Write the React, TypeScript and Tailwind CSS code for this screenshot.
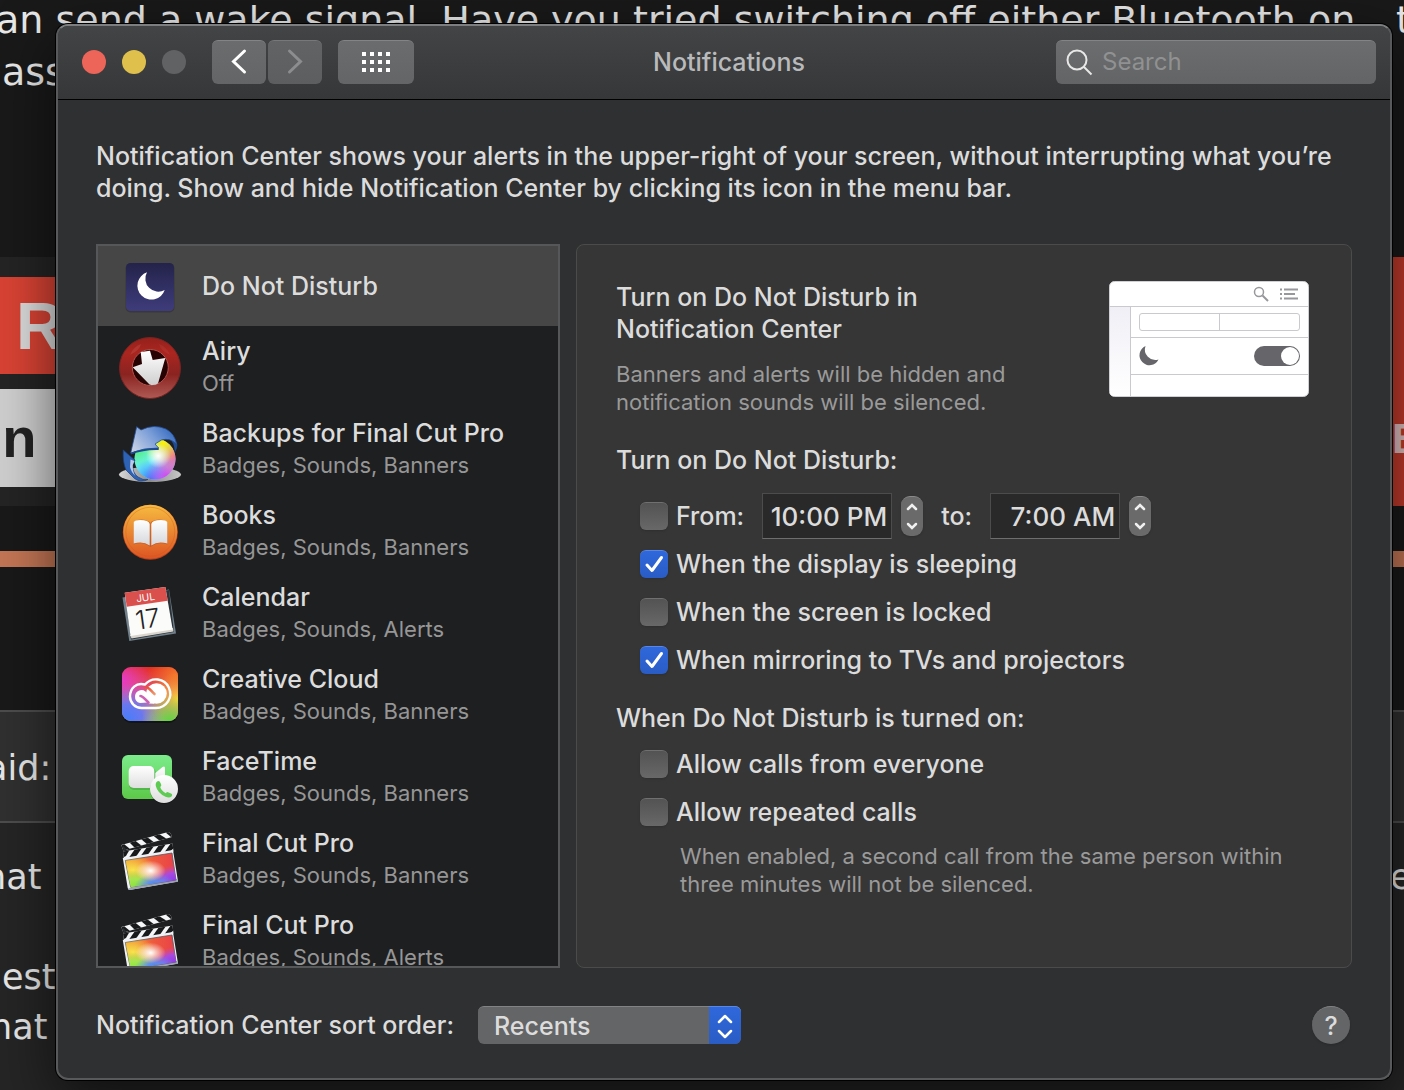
import { useId, useState } from "react";
import type { ReactNode } from "react";

function MoonIcon() {
  return (
    <svg viewBox="0 0 64 64" className="size-16" aria-hidden="true">
      <defs>
        <linearGradient id="dnd-bg" x1="0" y1="0" x2="0" y2="1">
          <stop offset="0" stopColor="#23234a" />
          <stop offset="1" stopColor="#3f3c7c" />
        </linearGradient>
      </defs>
      <rect x="7.5" y="9.5" width="49" height="49" rx="5" fill="#000" opacity=".2" />
      <rect x="8" y="9" width="48" height="48" rx="4.5" fill="url(#dnd-bg)" />
      <path d="M29 18.300A14 14 0 1 0 46.700 36A13 13 0 0 1 29 18.300Z" fill="#fff" />
    </svg>
  );
}

function AiryIcon() {
  return (
    <svg viewBox="0 0 64 64" className="size-16" aria-hidden="true">
      <defs>
        <linearGradient id="airy-ball" x1="0" y1="0" x2="0" y2="1">
          <stop offset="0" stopColor="#94201b" />
          <stop offset=".25" stopColor="#ab2620" />
          <stop offset=".6" stopColor="#8a2320" />
          <stop offset="1" stopColor="#b05a55" />
        </linearGradient>
        <linearGradient id="airy-arrow" x1="0" y1="0" x2="0" y2="1">
          <stop offset="0" stopColor="#fff" />
          <stop offset="1" stopColor="#cfcfcf" />
        </linearGradient>
      </defs>
      <circle cx="32" cy="33" r="30.500" fill="url(#airy-ball)" stroke="#7a2320" strokeWidth="1" />
      <path d="M12 20Q15 12 23 9Q22 15 12 20Z" fill="#d86b62" opacity=".25" />
      <path d="M52 20Q49 12 41 9Q42 15 52 20Z" fill="#d86b62" opacity=".15" />
      <circle cx="32.300" cy="32.500" r="18" fill="#280303" stroke="#b5524c" strokeWidth="1" />
      <path
        d="M22.700 17L32 15.700L34.700 25L47.300 23L40 48.500Q36 51 31.500 49.500L14.700 32.300L24 29Z"
        fill="url(#airy-arrow)"
      />
    </svg>
  );
}

function BackupsIcon() {
  return (
    <svg viewBox="0 0 64 66" className="h-[66px] w-16" aria-hidden="true">
      <defs>
        <radialGradient id="orb-y" cx=".7" cy=".1" r=".5">
          <stop offset="0" stopColor="#fff200" />
          <stop offset="1" stopColor="#fff200" stopOpacity="0" />
        </radialGradient>
        <radialGradient id="orb-r" cx="1" cy=".4" r=".55">
          <stop offset="0" stopColor="#ff5aa0" />
          <stop offset="1" stopColor="#ff5aa0" stopOpacity="0" />
        </radialGradient>
        <radialGradient id="orb-m" cx=".8" cy=".95" r=".55">
          <stop offset="0" stopColor="#e03cf0" />
          <stop offset="1" stopColor="#e03cf0" stopOpacity="0" />
        </radialGradient>
        <radialGradient id="orb-b" cx=".4" cy="1" r=".5">
          <stop offset="0" stopColor="#2f7cff" />
          <stop offset="1" stopColor="#2f7cff" stopOpacity="0" />
        </radialGradient>
        <radialGradient id="orb-g" cx="0" cy=".15" r=".6">
          <stop offset="0" stopColor="#4bea5c" />
          <stop offset="1" stopColor="#4bea5c" stopOpacity="0" />
        </radialGradient>
        <radialGradient id="orb-w" cx=".58" cy=".42" r=".3">
          <stop offset="0" stopColor="#fff" />
          <stop offset="1" stopColor="#fff" stopOpacity="0" />
        </radialGradient>
        <linearGradient id="bk-arrow" x1="0" y1=".7" x2="1" y2=".2">
          <stop offset="0" stopColor="#c3cee4" />
          <stop offset=".5" stopColor="#7c9fd8" />
          <stop offset="1" stopColor="#2f66bd" />
        </linearGradient>
        <linearGradient id="bk-shadow" x1="0" y1="0" x2="1" y2="0">
          <stop offset="0" stopColor="#d8d8d8" />
          <stop offset=".5" stopColor="#8a8a8a" />
          <stop offset="1" stopColor="#c8c8c8" />
        </linearGradient>
      </defs>
      <ellipse cx="32" cy="58.500" rx="31" ry="7.500" fill="url(#bk-shadow)" />
      <circle cx="37" cy="43" r="20.500" fill="#6ff4f4" />
      <circle cx="37" cy="43" r="20.500" fill="url(#orb-g)" />
      <circle cx="37" cy="43" r="20.500" fill="url(#orb-b)" />
      <circle cx="37" cy="43" r="20.500" fill="url(#orb-m)" />
      <circle cx="37" cy="43" r="20.500" fill="url(#orb-r)" />
      <circle cx="37" cy="43" r="20.500" fill="url(#orb-y)" />
      <circle cx="37" cy="43" r="20.500" fill="url(#orb-w)" />
      <path d="M51 22Q56 26 57 36Q61 30 58 25Z" fill="#1e4a92" />
      <path
        d="M18.700 10.700L23 14Q36 7.500 48 13Q57 18 58.500 28Q52 21.500 43.500 24L37 28L40.700 32Q26 31.500 12.700 37Z"
        fill="url(#bk-arrow)"
        stroke="#24509a"
        strokeWidth=".8"
      />
      <path d="M12.700 37Q26 31.500 40.700 32V34Q26 33.500 13 38.500Z" fill="#1e4a92" />
      <path
        d="M5.300 34L12 40L17 44L14.500 49Q14.500 57 20 61Q25 64.500 30 63.500Q23 67 16.500 62.500L8 54Q4.500 46 5.300 34Z"
        fill="#2d62b4"
        stroke="#1a3f80"
        strokeWidth=".7"
      />
      <path d="M12.500 43.500L16.500 45L14.800 49Q14.500 56 17.500 60Q13 56 12 51Z" fill="#b9c9e6" />
    </svg>
  );
}

function BooksIcon() {
  return (
    <svg viewBox="0 0 64 64" className="size-16" aria-hidden="true">
      <defs>
        <linearGradient id="books-bg" x1="0" y1="0" x2="0" y2="1">
          <stop offset="0" stopColor="#f6bb40" />
          <stop offset="1" stopColor="#dd5423" />
        </linearGradient>
        <linearGradient id="books-page" x1="0" y1="0" x2="0" y2="1">
          <stop offset="0" stopColor="#fff" />
          <stop offset="1" stopColor="#d4d6da" />
        </linearGradient>
      </defs>
      <circle cx="32.300" cy="33.300" r="27.500" fill="#b8401c" />
      <circle cx="32.300" cy="32.800" r="27" fill="url(#books-bg)" />
      <circle cx="32.300" cy="32.800" r="24.500" fill="none" stroke="#c9551f" strokeOpacity=".35" />
      <path
        d="M15.700 23Q23 18.500 31 22.500Q32 23 32.300 24Q32.600 23 33.600 22.500Q41.600 18.500 49.300 23V45.500Q40 42 32.500 48Q25 42 15.700 45.500Z"
        fill="#b84a1c"
        opacity=".55"
      />
      <path d="M15.700 23Q17 21 22 21Q31 21 31.700 25V46.500Q25 41.500 15.700 44.500Z" fill="url(#books-page)" />
      <path d="M49.300 23Q48 21 43 21Q34 21 33.300 25V46.500Q40 41.500 49.300 44.500Z" fill="url(#books-page)" />
    </svg>
  );
}

function CalendarIcon() {
  return (
    <svg viewBox="0 0 64 64" className="size-16" aria-hidden="true">
      <path d="M4.500 16.500L51 8.500L58 52.500L11.300 60Z" fill="#71808b" />
      <path d="M8 18L51 9L56 51L13 58.500Z" fill="#2c3338" />
      <path d="M12 54L55 47L55.500 50.500L13.500 57.500Z" fill="#d9d5cd" />
      <path d="M6.700 11.700L47.300 6L54.700 48.500L12.500 55Z" fill="#fbfbfa" />
      <path d="M6.700 11.700L47.300 6L49.700 19.700L8.800 25.700Z" fill="#d9504c" />
      <text
        x="28"
        y="20"
        textAnchor="middle"
        transform="rotate(-8 28 20)"
        className="fill-white font-['Inter',sans-serif] text-[10px] font-normal"
      >
        JUL
      </text>
      <text
        x="31"
        y="47"
        textAnchor="middle"
        transform="rotate(-8 31 47)"
        className="fill-[#222] font-['Inter',sans-serif] text-[26px] font-light"
      >
        17
      </text>
    </svg>
  );
}

function CreativeCloudIcon() {
  return (
    <svg viewBox="0 0 64 64" className="size-16" aria-hidden="true">
      <defs>
        <radialGradient id="cc-m" cx="0" cy=".25" r=".55">
          <stop offset="0" stopColor="#e63cc8" />
          <stop offset="1" stopColor="#e63cc8" stopOpacity="0" />
        </radialGradient>
        <radialGradient id="cc-b" cx=".1" cy=".95" r=".65">
          <stop offset="0" stopColor="#4a7dfa" />
          <stop offset=".4" stopColor="#6a78ee" />
          <stop offset="1" stopColor="#a06ae0" stopOpacity="0" />
        </radialGradient>
        <radialGradient id="cc-g" cx=".85" cy="1" r=".5">
          <stop offset="0" stopColor="#5fd63c" />
          <stop offset="1" stopColor="#8ad850" stopOpacity="0" />
        </radialGradient>
        <radialGradient id="cc-y" cx="1" cy=".6" r=".5">
          <stop offset="0" stopColor="#f8d838" />
          <stop offset="1" stopColor="#f6a040" stopOpacity="0" />
        </radialGradient>
        <radialGradient id="cc-o" cx=".95" cy=".15" r=".5">
          <stop offset="0" stopColor="#f2762a" />
          <stop offset="1" stopColor="#f2762a" stopOpacity="0" />
        </radialGradient>
        <linearGradient id="cc-base" x1="0" y1="0" x2="0" y2="1">
          <stop offset="0" stopColor="#e42a1c" />
          <stop offset=".5" stopColor="#e0607a" />
          <stop offset="1" stopColor="#b0a0a8" />
        </linearGradient>
        <linearGradient id="cc-gap" x1="0" y1="0" x2="0" y2="1">
          <stop offset="0" stopColor="#ea5438" />
          <stop offset="1" stopColor="#ee9a70" />
        </linearGradient>
      </defs>
      <rect x="4" y="6" width="56" height="54" rx="9" fill="#000" opacity=".35" />
      <rect x="4" y="4" width="56" height="54" rx="9" fill="url(#cc-base)" />
      <rect x="4" y="4" width="56" height="54" rx="9" fill="url(#cc-m)" />
      <rect x="4" y="4" width="56" height="54" rx="9" fill="url(#cc-b)" />
      <rect x="4" y="4" width="56" height="54" rx="9" fill="url(#cc-o)" />
      <rect x="4" y="4" width="56" height="54" rx="9" fill="url(#cc-y)" />
      <rect x="4" y="4" width="56" height="54" rx="9" fill="url(#cc-g)" />
      <path
        d="M23.500 45H38A14.300 14.300 0 1 0 27 21.500C18 19 12 25.500 12 33.500A11.500 11.500 0 0 0 23.500 45Z"
        fill="none"
        stroke="#fff"
        strokeWidth="2.400"
      />
      <circle cx="38.500" cy="30.500" r="10.300" fill="#fff" />
      <path
        d="M17 33.500A6.500 6.500 0 0 1 27.500 28.500L38 38.500L36 40.800L31 40.500L29 39.500L22 40A6.500 6.500 0 0 1 17 33.500Z"
        fill="#fff"
      />
      <path d="M28 24.500C31.500 24.500 33 28 36.500 31" fill="none" stroke="url(#cc-gap)" strokeWidth="2.600" strokeLinecap="round" />
      <path d="M22.500 33C25 33 26.500 36 30.500 39.500" fill="none" stroke="#cc62b4" strokeWidth="2.600" strokeLinecap="round" />
    </svg>
  );
}

function FaceTimeIcon() {
  return (
    <svg viewBox="0 0 64 64" className="size-16" aria-hidden="true">
      <defs>
        <linearGradient id="ft-bg" x1="0" y1="0" x2="0" y2="1">
          <stop offset="0" stopColor="#7cec8c" />
          <stop offset="1" stopColor="#5cc948" />
        </linearGradient>
        <linearGradient id="ft-cam" x1="0" y1="0" x2="0" y2="1">
          <stop offset="0" stopColor="#fff" />
          <stop offset="1" stopColor="#dedede" />
        </linearGradient>
      </defs>
      <rect x="4" y="10" width="50" height="44" rx="6" fill="url(#ft-bg)" />
      <rect x="11" y="23" width="27" height="22" rx="5" fill="#2a7a2a" opacity=".3" />
      <rect x="10.700" y="21" width="25.600" height="22" rx="5" fill="url(#ft-cam)" />
      <path d="M37.300 28L44.500 22Q47 20.500 47 23V42L37.300 36Z" fill="url(#ft-cam)" />
      <circle cx="46" cy="45" r="14" fill="#000" opacity=".3" />
      <circle cx="46" cy="44" r="14" fill="url(#ft-cam)" />
      <path
        d="M39.500 36.300Q41.500 35.500 42.500 38L43.300 40Q43.500 41 42.200 42Q43.500 46 47.800 48.200Q49 46.800 50 47.200L53 48.500Q55 49.500 53.500 51.500Q51.500 53.500 47.500 51.800Q39.500 48 37.800 41Q37.300 37.500 39.500 36.300Z"
        fill="#5ecb52"
      />
    </svg>
  );
}

function FinalCutIcon() {
  const id = useId();
  const screen = "M7.300 33.500L54 26L58 53L12.700 60.300Z";
  return (
    <svg viewBox="0 0 64 64" className="size-16" aria-hidden="true">
      <defs>
        <linearGradient id={`${id}top`} x1="0" y1="0" x2="1" y2="0">
          <stop offset="0" stopColor="#f3a035" />
          <stop offset=".55" stopColor="#ee5a3c" />
          <stop offset="1" stopColor="#e8404a" />
        </linearGradient>
        <radialGradient id={`${id}y`} cx=".15" cy=".5" r=".45">
          <stop offset="0" stopColor="#f8e44c" />
          <stop offset="1" stopColor="#f8e44c" stopOpacity="0" />
        </radialGradient>
        <radialGradient id={`${id}g`} cx=".2" cy="1" r=".5">
          <stop offset="0" stopColor="#86e23c" />
          <stop offset=".5" stopColor="#a6e650" />
          <stop offset="1" stopColor="#a6e650" stopOpacity="0" />
        </radialGradient>
        <radialGradient id={`${id}b`} cx=".6" cy="1" r=".42">
          <stop offset="0" stopColor="#2f7df0" />
          <stop offset=".4" stopColor="#5a8cf4" />
          <stop offset="1" stopColor="#5a8cf4" stopOpacity="0" />
        </radialGradient>
        <radialGradient id={`${id}p`} cx=".98" cy=".8" r=".45">
          <stop offset="0" stopColor="#8e3ae8" />
          <stop offset=".5" stopColor="#a84ae0" />
          <stop offset="1" stopColor="#d04ab0" stopOpacity="0" />
        </radialGradient>
        <radialGradient id={`${id}w`} cx=".5" cy=".52" r=".3">
          <stop offset="0" stopColor="#fff" />
          <stop offset="1" stopColor="#fff" stopOpacity="0" />
        </radialGradient>
        <clipPath id={`${id}arm`}>
          <path d="M3.300 18L50 5Q53 5.500 54 10L5.300 23.500Z" />
        </clipPath>
        <clipPath id={`${id}bar`}>
          <path d="M5 24.500L54.500 16.500L55.500 24.500L6 32.500Z" />
        </clipPath>
      </defs>
      <path d="M3.300 18L50 5Q53 5.500 54 10L5.300 23.500Z" fill="#f4f6f8" />
      <g clipPath={`url(#${id}arm)`} fill="#17191b">
        <path d="M2 19L6 17L12 22L5 24Z" />
        <path d="M11 15L17 13.500L24 19L17 21Z" />
        <path d="M23 12L29 10L37 16L30 18Z" />
        <path d="M35 8.500L41 7L49 12L42 14Z" />
        <path d="M47 5L53 4L56 9L53 10Z" />
      </g>
      <path d="M5 24.500L54.500 16.500L55.500 24.500L6 32.500Z" fill="#f4f6f8" />
      <g clipPath={`url(#${id}bar)`} fill="#17191b">
        <path d="M4 23L12 22L8 29L4 31Z" />
        <path d="M17 22L24 21L17 31L10 32Z" />
        <path d="M29 20L36 19L29 29L22 30Z" />
        <path d="M41 18L48 17L41 27L34 28Z" />
        <path d="M53 16L56 15L56 21L50 26L46 26Z" />
      </g>
      <path d="M4.300 18L6 25L8 22Z" fill="#2b2f33" />
      <path d="M4.800 31L55 23L60 54.500L11.500 63Q10 63 9.700 61Z" fill="#eef0f4" />
      <path d="M59.200 52L60 54.700L11.500 63L10 61.500Z" fill="#9aa2b4" />
      <path d={screen} fill={`url(#${id}top)`} stroke="#54585e" strokeWidth=".8" />
      <path d={screen} fill={`url(#${id}y)`} />
      <path d={screen} fill={`url(#${id}g)`} />
      <path d={screen} fill={`url(#${id}p)`} />
      <path d={screen} fill={`url(#${id}b)`} />
      <path d={screen} fill={`url(#${id}w)`} />
    </svg>
  );
}

const apps: { name: string; detail?: string; icon: ReactNode }[] = [
  { name: "Do Not Disturb", icon: <MoonIcon /> },
  { name: "Airy", detail: "Off", icon: <AiryIcon /> },
  { name: "Backups for Final Cut Pro", detail: "Badges, Sounds, Banners", icon: <BackupsIcon /> },
  { name: "Books", detail: "Badges, Sounds, Banners", icon: <BooksIcon /> },
  { name: "Calendar", detail: "Badges, Sounds, Alerts", icon: <CalendarIcon /> },
  { name: "Creative Cloud", detail: "Badges, Sounds, Banners", icon: <CreativeCloudIcon /> },
  { name: "FaceTime", detail: "Badges, Sounds, Banners", icon: <FaceTimeIcon /> },
  { name: "Final Cut Pro", detail: "Badges, Sounds, Banners", icon: <FinalCutIcon /> },
  { name: "Final Cut Pro", detail: "Badges, Sounds, Alerts", icon: <FinalCutIcon /> },
];

// The forum page that shows around the edges of the window
function PageBehind() {
  return (
    <div
      aria-hidden="true"
      className="absolute inset-0 flex flex-col overflow-hidden bg-[#191919] font-['DejaVu_Sans',sans-serif] text-[35px] leading-[52px] font-normal whitespace-nowrap text-[#e8e8e8]"
    >
      <div className="h-[257px] shrink-0">
        <div className="-mt-1.5 -ml-1 flex justify-between text-[38px]">
          <p>an send a wake signal. Have you tried switching off either Bluetooth on</p>
          <p className="w-2">t</p>
        </div>
        <p className="ml-0.5 text-[38px]">ass</p>
      </div>
      <div className="flex h-[249px] shrink-0 justify-between bg-[#242424] font-['Liberation_Sans',sans-serif] font-bold">
        <div className="w-24 pt-5">
          <div className="flex h-[97px] items-center bg-[#d94334] pl-4 text-[66px] text-[#dcdcdc]">R</div>
          <div className="mt-[15px] flex h-[98px] items-center bg-[#cfcfcf] text-[56px] text-[#222]">
            <span className="-ml-8">on</span>
          </div>
        </div>
        <div className="w-3 bg-[#c23a2c] pt-[156px] text-[42px] text-[#e0c0c0]">B</div>
      </div>
      <div className="mt-[45px] h-4 shrink-0 bg-[#c47655]" />
      <div className="mt-[143px] h-[113px] shrink-0 border-y-2 border-[#4d4d4d] bg-[#303030] pt-[30px]">
        <p className="-ml-3.5">aid:</p>
      </div>
      <div className="h-[300px] shrink-0 bg-[#252525] pt-[29px] leading-[50px]">
        <div className="flex justify-between">
          <p className="-ml-4">hat</p>
          <p className="w-3.5">e</p>
        </div>
        <p className="mt-[50px] ml-0.5">est</p>
        <p className="-ml-2.5">hat</p>
      </div>
    </div>
  );
}

function TitleBar() {
  return (
    <header className="grid h-[74px] grid-cols-[1fr_auto_1fr] items-center rounded-t-[10px] border-b border-black bg-linear-to-b from-[#434446] to-[#363738] pr-3.5 pb-0.5 pl-6">
      <div className="flex items-center">
        <div className="flex gap-4">
          <button aria-label="Close" className="size-6 rounded-full bg-[#ed6559]" />
          <button aria-label="Minimize" className="size-6 rounded-full bg-[#dfc04c]" />
          <button aria-label="Zoom" disabled className="size-6 rounded-full bg-[#616263]" />
        </div>
        <div className="ml-[26px] flex gap-0.5">
          <button
            aria-label="Back"
            className="flex h-11 w-[54px] items-center justify-center rounded-md border-t border-[#838485] bg-linear-to-b from-[#6b6c6e] to-[#646566]"
          >
            <svg viewBox="0 0 54 44" className="h-11 w-[54px]" fill="none" stroke="#fff" strokeWidth="3" strokeLinecap="round">
              <path d="M32.500 11L21.500 21.500L32.500 32" />
            </svg>
          </button>
          <button
            aria-label="Forward"
            disabled
            className="flex h-11 w-[54px] items-center justify-center rounded-md border-t border-[#777879] bg-linear-to-b from-[#626365] to-[#5d5e5f]"
          >
            <svg viewBox="0 0 54 44" className="h-11 w-[54px]" fill="none" stroke="#8c8d8e" strokeWidth="3" strokeLinecap="round">
              <path d="M21.500 11L32.500 21.500L21.500 32" />
            </svg>
          </button>
        </div>
        <button
          aria-label="Show all"
          className="ml-4 flex h-11 w-[76px] items-center justify-center rounded-md border-t border-[#838485] bg-linear-to-b from-[#6b6c6e] to-[#646566]"
        >
          <svg viewBox="0 0 28 20" className="h-5 w-7" fill="#fff">
            {[0, 8, 16].map((y) => (
              <path key={y} d={`M0 ${y}h4v4h-4zM8 ${y}h4v4h-4zM16 ${y}h4v4h-4zM24 ${y}h4v4h-4z`} />
            ))}
          </svg>
        </button>
      </div>
      <h1 className="text-[#b9babb]">Notifications</h1>
      <label className="flex h-11 w-80 items-center gap-2 justify-self-end rounded-md border-t border-[#838485] bg-linear-to-b from-[#6c6d6e] to-[#636465] pl-2.5">
        <svg viewBox="0 0 28 28" className="size-7 shrink-0" fill="none" stroke="#e8e8e8" strokeWidth="2">
          <circle cx="11" cy="12" r="9.500" />
          <path d="M18 19L25.500 26.500" />
        </svg>
        <input
          type="search"
          aria-label="Search"
          placeholder="Search"
          className="w-full bg-transparent text-[24px] font-normal outline-none placeholder:text-[#909192]"
        />
      </label>
    </header>
  );
}

function Checkbox({ label, defaultChecked }: { label: string; defaultChecked?: boolean }) {
  return (
    <label className="flex h-12 items-center gap-2">
      <span className="relative size-7">
        <input
          type="checkbox"
          defaultChecked={defaultChecked}
          className="peer block size-7 appearance-none rounded-md border-t border-[#707070] bg-linear-to-b from-[#535353] to-[#686868] shadow-sm checked:border-[#5b87e4] checked:from-[#2f68dc] checked:to-[#2a5cc4]"
        />
        <svg
          viewBox="0 0 28 28"
          className="pointer-events-none absolute inset-0 hidden size-7 peer-checked:block"
          fill="none"
          stroke="#fff"
          strokeWidth="3"
          strokeLinecap="round"
          strokeLinejoin="round"
        >
          <path d="M7 15L12 20.500L21.500 7.500" />
        </svg>
      </span>
      {label}
    </label>
  );
}

function TimeField({ label, defaultValue }: { label: string; defaultValue: string }) {
  return (
    <div className="flex items-center gap-[9px]">
      <input
        type="text"
        aria-label={label}
        defaultValue={defaultValue}
        className="h-[46px] w-[130px] border border-[#4c4c4c] border-b-[#6e6e6e] bg-[#292929] pr-1 text-right text-[26px] outline-none"
      />
      <div className="flex h-10 w-[22px] flex-col rounded-[9px] border-t border-[#8a8a8a] bg-[#6a6a6a] shadow-sm">
        <button aria-label={`${label} later`} className="flex h-5 items-center justify-center">
          <svg viewBox="0 0 12 8" className="h-2 w-3" fill="none" stroke="#f0f0f0" strokeWidth="2.500" strokeLinecap="round">
            <path d="M2 6L6 2L10 6" />
          </svg>
        </button>
        <button aria-label={`${label} earlier`} className="flex h-5 items-center justify-center">
          <svg viewBox="0 0 12 8" className="h-2 w-3" fill="none" stroke="#f0f0f0" strokeWidth="2.500" strokeLinecap="round">
            <path d="M2 2L6 6L10 2" />
          </svg>
        </button>
      </div>
    </div>
  );
}

function NotificationCenterPreview() {
  return (
    <svg viewBox="0 0 200 116" className="h-[116px] w-[200px] shrink-0" aria-hidden="true">
      <defs>
        <linearGradient id="side" x1="0" y1="0" x2="0" y2="1">
          <stop offset="0" stopColor="#f0eff6" />
          <stop offset="1" stopColor="#fff" />
        </linearGradient>
      </defs>
      <rect x=".5" y=".5" width="199" height="115" rx="5" fill="#fff" stroke="#d0d0d4" />
      <path d="M1 26H21V115H5Q1 115 1 111Z" fill="url(#side)" />
      <g fill="none" stroke="#c9c9ce">
        <path d="M0 25.500H200M21.500 25.500V115M21.500 56.500H199M21.500 93.500H199" />
        <rect x="30.500" y="32.500" width="160" height="17" rx="2.500" />
        <path d="M110.500 32.500V49.500" />
      </g>
      <g fill="none" stroke="#98989c" strokeWidth="1.500">
        <circle cx="150" cy="11" r="4.500" />
        <path d="M153.500 14.500L159 20" strokeWidth="2" />
        <path d="M175 8.500H189M175 13H186M175 17.500H189M171 8.500H173M171 13H173M171 17.500H173" strokeWidth="1.800" />
      </g>
      <path d="M36.500 65A10 10 0 1 0 49.500 78.500A10.500 10.500 0 0 1 36.500 65Z" fill="#666569" />
      <rect x="145" y="65" width="46" height="20" rx="10" fill="#666569" />
      <circle cx="181" cy="75" r="9" fill="#fff" />
    </svg>
  );
}

export default function App() {
  const [selected, setSelected] = useState(0);

  return (
    <div className="relative flow-root min-h-screen font-['Inter',sans-serif] text-[25px] leading-8 font-medium text-[#dcdcdc]">
      <PageBehind />

      <main className="relative mt-6 mr-3 mb-2.5 ml-14 rounded-xl border-2 border-[#58595a] border-t-[#7d7e7f] bg-[#2f3032] shadow-[0_0_0_1px_#000,0_20px_60px_rgba(0,0,0,0.6)]">
        <TitleBar />

        <div className="px-[38px] pt-10 pb-[34px]">
          <p>
            Notification Center shows your alerts in the upper-right of your screen, without interrupting what you’re
            doing. Show and hide Notification Center by clicking its icon in the menu bar.
          </p>

          <div className="mt-10 flex h-[724px] gap-4">
            <ul className="w-[464px] shrink-0 overflow-hidden border-2 border-[#565758] bg-[#1e1f21]">
              {apps.map((app, i) => (
                <li key={i}>
                  <button
                    onClick={() => setSelected(i)}
                    className={`flex w-full items-center gap-5 pl-5 text-left ${app.detail ? "h-[82px]" : "h-20"} ${
                      selected === i ? "bg-[#464646]" : ""
                    }`}
                  >
                    {app.icon}
                    <span>
                      <span className="block">{app.name}</span>
                      {app.detail && (
                        <span className="block text-[22px] font-normal text-[#969696]">{app.detail}</span>
                      )}
                    </span>
                  </button>
                </li>
              ))}
            </ul>

            <section className="min-w-0 flex-1 rounded-lg border border-[#4b4b4b] bg-[#363636] px-[39px] pt-9">
              <div className="flex items-start justify-between pr-[3px]">
                <div>
                  <h2>
                    Turn on Do Not Disturb in
                    <br />
                    Notification Center
                  </h2>
                  <p className="mt-[15px] text-[22px] leading-7 font-normal text-[#9a9a9a]">
                    Banners and alerts will be hidden and
                    <br />
                    notification sounds will be silenced.
                  </p>
                </div>
                <NotificationCenterPreview />
              </div>

              <h3 className="mt-7">Turn on Do Not Disturb:</h3>
              <div className="mt-4 pl-6">
                <div className="flex h-12 items-center gap-[18px]">
                  <Checkbox label="From:" />
                  <TimeField label="From time" defaultValue="10:00 PM" />
                  <span>to:</span>
                  <TimeField label="To time" defaultValue="7:00 AM" />
                </div>
                <Checkbox label="When the display is sleeping" defaultChecked />
                <Checkbox label="When the screen is locked" />
                <Checkbox label="When mirroring to TVs and projectors" defaultChecked />
              </div>

              <h3 className="mt-[18px]">When Do Not Disturb is turned on:</h3>
              <div className="mt-1.5 pl-6">
                <Checkbox label="Allow calls from everyone" />
                <Checkbox label="Allow repeated calls" />
                <p className="mt-1.5 pl-10 text-[22px] leading-7 font-normal text-[#9a9a9a]">
                  When enabled, a second call from the same person within three minutes will not be silenced.
                </p>
              </div>
            </section>
          </div>

          <footer className="mt-[38px] flex items-center">
            <label htmlFor="sort-order">Notification Center sort order:</label>
            <div className="relative ml-6">
              <select
                id="sort-order"
                className="block h-[38px] w-[263px] appearance-none rounded-md border-t border-[#828384] bg-[#646567] pl-4 outline-none"
              >
                <option>Recents</option>
                <option>Recents by App</option>
                <option>Manually</option>
              </select>
              <span className="pointer-events-none absolute inset-y-0 right-0 flex w-8 items-center justify-center rounded-r-md border-t border-[#5b87e4] bg-linear-to-b from-[#2f68dc] to-[#2a5cc4]">
                <svg viewBox="0 0 16 26" className="h-[26px] w-4" fill="none" stroke="#fff" strokeWidth="2.500" strokeLinecap="round" strokeLinejoin="round">
                  <path d="M2 9L8 3L14 9M2 18L8 24L14 18" />
                </svg>
              </span>
            </div>
            <button
              aria-label="Help"
              className="mr-0.5 ml-auto flex size-[38px] items-center justify-center rounded-full border-t border-[#828384] bg-[#646567] shadow"
            >
              ?
            </button>
          </footer>
        </div>
      </main>
    </div>
  );
}
